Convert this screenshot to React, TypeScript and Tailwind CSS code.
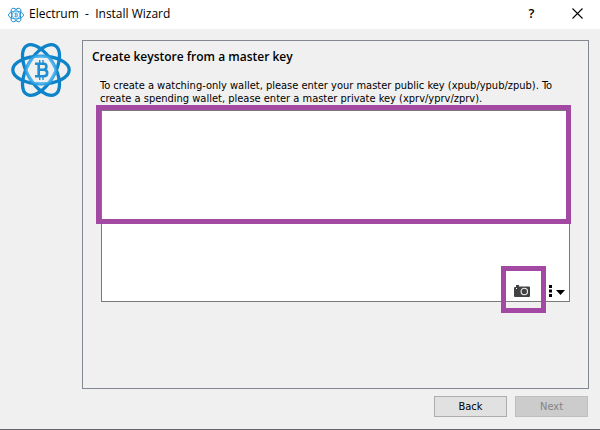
import { useState } from 'react'

function ElectrumLogo({ className }: { className: string }) {
  return (
    <svg className={className} viewBox="0 0 60 56" fill="none" aria-hidden="true">
      <defs>
        <radialGradient id="orbit" gradientUnits="userSpaceOnUse" cx="30" cy="28" r="20">
          <stop offset="0.68" stopColor="#4db4ee" />
          <stop offset="0.85" stopColor="#0d84c9" />
        </radialGradient>
      </defs>
      <g stroke="url(#orbit)" strokeWidth="3.3">
        <ellipse cx="30" cy="28" rx="28.2" ry="13.8" />
        <ellipse cx="30" cy="28" rx="28.2" ry="13.8" transform="rotate(60 30 28)" />
        <ellipse cx="30" cy="28" rx="28.2" ry="13.8" transform="rotate(-60 30 28)" />
      </g>
      <path d="M24 21.8H32.5Q35.4 21.8 35.4 24.5Q35.4 27.7 32.5 27.7H27.5M32.5 27.7Q36.2 27.7 36.2 31Q36.2 34.2 32.5 34.2H24M27.7 21.8V34.2" stroke="#1d8fd2" strokeWidth="2.6" />
      <path d="M28.7 18V21M32 18V21M28.7 35V38M32 35V38" stroke="#1d8fd2" strokeWidth="1.4" />
    </svg>
  )
}

function CameraIcon() {
  return (
    <svg className="h-3 w-4" viewBox="0 0 16 12" aria-hidden="true">
      <path d="M2 0H5V1.5H15Q16 1.5 16 2.5V11Q16 12 15 12H1Q0 12 0 11V3Q0 2 1 2H2Z" fill="#424242" />
      <circle cx="10.3" cy="6.5" r="3.2" fill="none" stroke="#f0f0f0" strokeWidth="1.1" />
      <rect x="2" y="3" width="1" height="1" fill="#fff" />
    </svg>
  )
}

function MenuIcon() {
  return (
    <svg className="h-3 w-4" viewBox="0 0 16 12" aria-hidden="true">
      <path d="M0 0H3V3H0ZM0 4.5H3V7.5H0ZM0 9H3V12H0ZM7 5H16L11.5 10Z" fill="#000" />
    </svg>
  )
}

export default function App() {
  const [masterKey, setMasterKey] = useState('')

  return (
    <div className="flex min-h-screen flex-col border-b border-[#626367] bg-[#f0f0f0] font-['DejaVu_Sans_Condensed','Noto_Sans',sans-serif] text-[11px] text-black">
      {/* Title bar */}
      <header className="flex h-[29px] items-center bg-white pl-2">
        <ElectrumLogo className="h-4 w-4" />
        <h1 className="ml-[5px] flex-1 pb-px whitespace-pre font-['Open_Sans',sans-serif] text-[12px]">Electrum  -  Install Wizard</h1>
        <button type="button" aria-label="Help" className="flex h-full w-[45px] items-center justify-center pb-0.5 font-['Open_Sans',sans-serif] text-[13px] font-semibold">?</button>
        <button type="button" aria-label="Close" className="flex h-full w-[46px] items-center justify-center pb-0.5">
          <svg className="h-[11px] w-[11px]" viewBox="0 0 11 11" stroke="#000" strokeWidth="1.1" aria-hidden="true">
            <path d="M0.5 0.5L10.5 10.5M10.5 0.5L0.5 10.5" />
          </svg>
        </button>
      </header>

      <main className="flex flex-1 pt-[11px] pr-[11px]">
        <div className="w-[82px] shrink-0 pt-0.5 pl-[11px]">
          <ElectrumLogo className="h-14 w-[60px]" />
        </div>
        <section className="flex flex-1 flex-col border border-[#828790] pt-2 pr-[18px] pb-[86px] pl-[9px]">
          <h2 className="font-['Open_Sans',sans-serif] text-[12px] leading-4 font-semibold">Create keystore from a master key</h2>
          <label htmlFor="master-key" className="mt-[14px] ml-2 block leading-[13px]">
            To create a watching-only wallet, please enter your master public key (xpub/ypub/zpub). To create a spending wallet, please enter a master private key (xprv/yprv/zprv).
          </label>
          <div className="relative mt-[5px] ml-[9px] flex flex-1">
            <textarea
              id="master-key"
              className="w-full resize-none border border-[#7a7a7a] bg-white p-1 outline-none"
              value={masterKey}
              onChange={(e) => setMasterKey(e.target.value)}
            />
            {/* Highlights */}
            <div className="pointer-events-none absolute -top-[5px] -right-px -left-[5px] h-[119px] border-[5px] border-[#a349a4]" />
            <div className="absolute right-[5px] -bottom-[11px] flex items-center gap-[3px]">
              <div className="flex h-[47px] w-[45px] items-center justify-center border-[5px] border-[#a349a4]">
                <button type="button" aria-label="Scan QR code" className="mt-0.5 ml-[-3px]">
                  <CameraIcon />
                </button>
              </div>
              <button type="button" aria-label="More options" className="mt-0.5">
                <MenuIcon />
              </button>
            </div>
          </div>
        </section>
      </main>

      <footer className="flex justify-end gap-2 pt-[7px] pr-3 pb-3">
        <button type="button" className="h-[21px] w-[73px] border border-[#adadad] bg-[#e1e1e1] pt-px">Back</button>
        <button type="button" disabled className="h-[21px] w-[73px] border border-[#bfbfbf] bg-[#cccccc] pt-px text-[#838383]">Next</button>
      </footer>
    </div>
  )
}
